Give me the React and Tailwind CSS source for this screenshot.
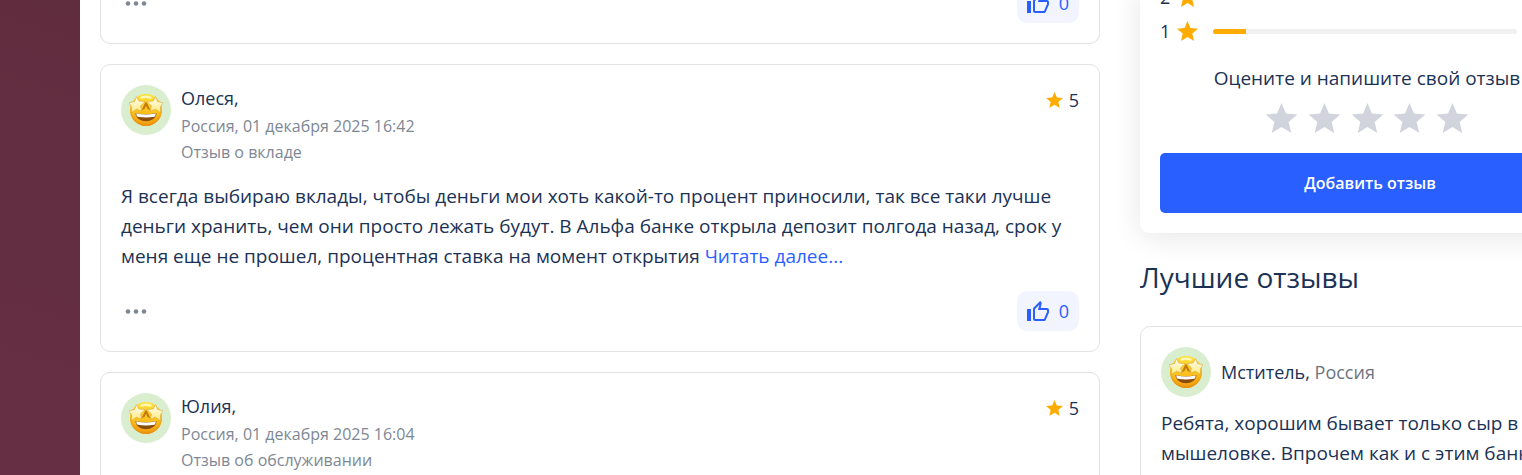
const STAR_PATH =
  'M12 17.27 18.18 21l-1.64-7.03L22 9.24l-7.19-.61L12 2 9.19 8.63 2 9.24l5.46 4.73L5.82 21z';

function Star({ className }) {
  return (
    <svg viewBox="2 2 20 19" fill="currentColor" aria-hidden="true" className={className}>
      <path d={STAR_PATH} />
    </svg>
  );
}

function Avatar() {
  return (
    <span className="flex size-[50px] shrink-0 items-center justify-center rounded-full bg-[#d9eecf]">
      <svg viewBox="0 0 34 34" aria-hidden="true" className="size-[34px]">
        <defs>
          <linearGradient id="face" x1="0" y1="0" x2="0" y2="1">
            <stop offset="0" stopColor="#fde23a" />
            <stop offset="0.55" stopColor="#fcc21d" />
            <stop offset="1" stopColor="#f39a0e" />
          </linearGradient>
          <radialGradient id="cheeks" cx="0.5" cy="0.42" r="0.6">
            <stop offset="0.7" stopColor="#f9b414" stopOpacity="0" />
            <stop offset="1" stopColor="#dc7f0c" />
          </radialGradient>
          <linearGradient id="eye" x1="0" y1="0" x2="0" y2="1">
            <stop offset="0" stopColor="#fffdf0" />
            <stop offset="1" stopColor="#fdea80" />
          </linearGradient>
        </defs>
        <circle cx="17" cy="17" r="16" fill="url(#face)" />
        <circle cx="17" cy="17" r="16" fill="url(#cheeks)" />
        <path d="M12.500 4.600q4.500-1.800 9 0" fill="none" stroke="#fff6b8" strokeWidth="2.400" strokeLinecap="round" />
        <path
          d="M12.500 17.500 16.200 9.500h1.600l3.700 8-3.200-1.800-1.300-3-1.300 3z"
          fill="#c47a10"
        />
        <path
          d="M7.400 3.600 9.900 8l6.300.6-4.600 4.300 1.200 5.300-5.300-2-5.200 3.600.4-5.800L-.2 9.900l5.700-1.400z"
          fill="url(#eye)"
          stroke="#d4962a"
          strokeWidth="0.5"
          strokeLinejoin="round"
        />
        <path
          d="M26.600 3.600 24.100 8l-6.300.6 4.600 4.300-1.200 5.300 5.300-2 5.200 3.600-.4-5.800 2.900-4.100-5.700-1.400z"
          fill="url(#eye)"
          stroke="#d4962a"
          strokeWidth="0.5"
          strokeLinejoin="round"
        />
        <path
          d="M7 20q10 2.400 20 0c.4 0 .6.3.5.8C26.600 25.700 22.300 28.200 17 28.200S7.400 25.700 6.500 20.800c-.1-.5.1-.8.5-.8z"
          fill="#8a4d0d"
        />
        <path d="M7.200 20.300q9.800 2.400 19.600 0-.1 2.900-1.500 3.400-8.300 1.400-16.600 0-1.400-.5-1.500-3.400z" fill="#fff" />
      </svg>
    </span>
  );
}

function CardFooter() {
  return (
    <div className="flex items-center justify-between">
      <button type="button" aria-label="Ещё" className="flex h-10 w-[30px] items-center justify-center text-[#7e8794]">
        <svg viewBox="0 0 22 5" fill="currentColor" aria-hidden="true" className="h-[5px] w-[22px]">
          <circle cx="3" cy="2.500" r="2.300" />
          <circle cx="11" cy="2.500" r="2.300" />
          <circle cx="19" cy="2.500" r="2.300" />
        </svg>
      </button>
      <button
        type="button"
        className="flex h-10 items-center gap-2.5 rounded-[10px] bg-[#f2f5ff] px-2.5 text-[18px] text-[#295fff]"
      >
        <svg viewBox="1 1 22 20" fill="currentColor" aria-hidden="true" className="h-5 w-[22px]">
          <path d="M9 21h9c.83 0 1.540-.5 1.840-1.220l3.020-7.050c.09-.23.14-.47.14-.73v-2c0-1.100-.9-2-2-2h-6.310l.95-4.570.03-.32c0-.41-.17-.79-.44-1.060L14.170 1 7.580 7.590C7.220 7.950 7 8.450 7 9v10c0 1.100.9 2 2 2zM9 9l4.340-4.340L12 10h9v2l-3 7H9V9zM1 9h4v12H1z" />
        </svg>
        0
      </button>
    </div>
  );
}

function ReviewCard({ name, date, topic, rating, children }) {
  return (
    <article className="rounded-[10px] border border-[#e1e3e6] p-5">
      <header className="flex items-start gap-2.5">
        <Avatar />
        <div className="flex-1">
          <h3 className="mb-0.5 text-[18px] leading-[26px]">{name},</h3>
          <p className="text-[16px] leading-[26px] text-[#7e8794]">{date}</p>
          <p className="text-[16px] leading-[26px] text-[#7e8794]">{topic}</p>
        </div>
        <div className="flex items-center gap-1.5 text-[18px] leading-[30px]">
          <Star className="h-4 w-[17px] text-[#ffab00]" />
          {rating}
        </div>
      </header>
      {children}
    </article>
  );
}

function RatingRow({ value, fill }) {
  return (
    <div className="flex h-6 items-center">
      <span className="w-[17px] text-[18px]">{value}</span>
      <Star className="h-5 w-[21px] text-[#ffab00]" />
      <div className="mr-[63px] ml-[15px] h-[5px] flex-1 overflow-hidden rounded-full bg-[#f1f1f2]">
        <div className="h-full bg-[#ffab00]" style={{ width: `${fill}%` }} />
      </div>
    </div>
  );
}

export default function App() {
  return (
    <div className="h-screen overflow-hidden bg-linear-to-bl from-[#5a2b3a] to-[#672f44] pl-20 font-['Open_Sans','Noto_Sans',sans-serif] text-[#1b3255]">
      <div className="flex h-full gap-10 bg-white pl-5">
        <main className="-mt-[17px] flex min-w-0 flex-1 flex-col gap-5">
          <article className="rounded-b-[10px] border border-t-0 border-[#e1e3e6] px-5 pb-5">
            <CardFooter />
          </article>
          <ReviewCard name="Олеся" date="Россия, 01 декабря 2025 16:42" topic="Отзыв о вкладе" rating={5}>
            <p className="mt-4 mb-5 text-[19px] leading-[30px]">
              Я всегда выбираю вклады, чтобы деньги мои хоть какой-то процент приносили, так все таки лучше
              <br />
              деньги хранить, чем они просто лежать будут. В Альфа банке открыла депозит полгода назад, срок у
              <br />
              меня еще не прошел, процентная ставка на момент открытия{' '}
              <a href="#review" className="text-[#295fff]">
                Читать далее...
              </a>
            </p>
            <CardFooter />
          </ReviewCard>
          <ReviewCard name="Юлия" date="Россия, 01 декабря 2025 16:04" topic="Отзыв об обслуживании" rating={5} />
        </main>

        <aside className="-mt-[15px] -mr-[78px] w-[460px] shrink-0">
          <section className="rounded-b-[10px] px-5 pb-5 shadow-[0_4px_30px_rgba(0,0,0,0.1)]">
            <div className="flex flex-col gap-2.5">
              <RatingRow value={2} fill={0} />
              <RatingRow value={1} fill={11} />
            </div>
            <div className="mt-5 flex flex-col items-center gap-2.5 pr-1.5">
              <p className="text-[19px] leading-[30px]">Оцените и напишите свой отзыв</p>
              <div className="flex w-[204px] justify-between text-[#d1d4dc]">
                {[1, 2, 3, 4, 5].map((value) => (
                  <button key={value} type="button" aria-label={`Оценка ${value}`}>
                    <Star className="h-[30px] w-[33px]" />
                  </button>
                ))}
              </div>
            </div>
            <button
              type="button"
              className="mt-5 h-[60px] w-full rounded-[5px] bg-[#295fff] text-[16px] font-semibold text-white"
            >
              Добавить отзыв
            </button>
          </section>
          <h2 className="mt-6 text-[28px] leading-10">Лучшие отзывы</h2>
          <article className="mt-[29px] rounded-[10px] border border-[#e1e3e6] p-5">
            <header className="flex items-center gap-2.5">
              <Avatar />
              <p className="text-[18px]">
                Мститель, <span className="text-[#6c7480]">Россия</span>
              </p>
            </header>
            <p className="mt-[11px] text-[19px] leading-[30px] whitespace-nowrap">
              Ребята, хорошим бывает только сыр в
              <br />
              мышеловке. Впрочем как и с этим банком
            </p>
          </article>
        </aside>
      </div>
    </div>
  );
}
